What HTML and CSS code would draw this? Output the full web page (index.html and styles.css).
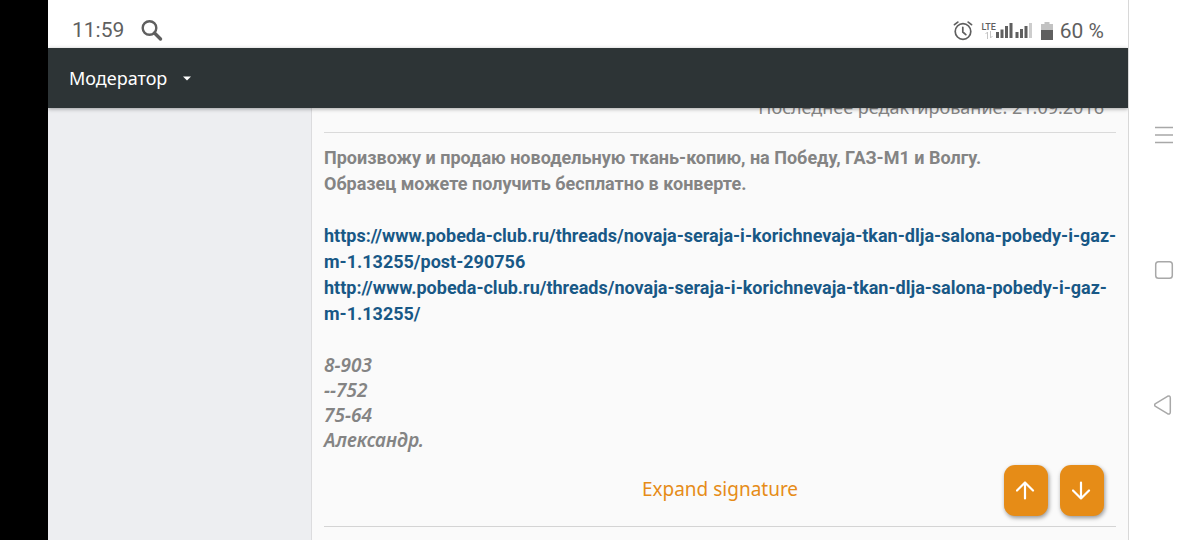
FILE: index.html
```html
<!DOCTYPE html>
<html lang="ru">
<head>
<meta charset="utf-8">
<meta name="viewport" content="width=device-width, initial-scale=1">
<title>Модератор</title>
<link rel="stylesheet" href="styles.css">
</head>
<body>
<div class="device">
  <div class="notch"></div>
  <div class="screen">
    <div class="status">
      <span class="clock">11:59</span>
      <svg class="status-search" width="22" height="22" viewBox="0 0 22 22" fill="none" stroke="#5f5f5f"><circle cx="8.500" cy="8" r="6.800" stroke-width="2.400"/><path d="M13.500 13L19.500 19" stroke-width="3.400" stroke-linecap="round"/></svg>
      <span class="spacer"></span>
      <svg width="20" height="20" viewBox="0 0 20 20" fill="none" stroke="#5f5f5f" stroke-width="1.700" stroke-linecap="round"><circle cx="10" cy="10.500" r="7.800"/><path d="M9.800 6.300V11L12.800 13.700M1.500 3.700L4.800 1.100M18.500 3.700L15.200 1.100"/></svg>
      <span class="network">
        <span class="lte">LTE</span>
        <svg class="data" width="8" height="8" viewBox="0 0 8 8" fill="none" stroke="#c4c4c4"><path d="M2.500 8V1L0.500 3M5.500 0V7L7.500 5"/></svg>
      </span>
      <svg class="signal" width="36" height="16" viewBox="0 0 36 16" fill="#5f5f5f"><path d="M0 9h3v6H0zM4.500 6.500h3V15h-3zM9 3h3v12H9zM13.500 0h3v15h-3zM19.500 9h3v6h-3zM24 6h3v9h-3zM28.500 3h3v12h-3z"/><path d="M33 0h3v15h-3z" fill="#cdcdcd"/></svg>
      <svg class="battery" width="12" height="18" viewBox="0 0 12 18"><path d="M3.500 0h5v2H12v6H0V2h3.500z" fill="#c2c2c2"/><path d="M0 8h12v10H0z" fill="#5f5f5f"/></svg>
      <span class="percent">60 %</span>
    </div>
    <header class="bar">
      <button class="menu" type="button">Модератор
        <svg width="8" height="5" viewBox="0 0 8 5" fill="#fff"><path d="M0 .5h8L4 4.500z"/></svg>
      </button>
    </header>
    <main class="page">
      <aside class="user"></aside>
      <article class="post">
        <p class="edited">Последнее редактирование: 21.09.2016</p>
        <section class="signature">
          <p class="pitch">Произвожу и продаю новодельную ткань-копию, на Победу, ГАЗ-М1 и Волгу.<br>Образец можете получить бесплатно в конверте.</p>
          <p class="links"><a href="https://www.pobeda-club.ru/threads/novaja-seraja-i-korichnevaja-tkan-dlja-salona-pobedy-i-gaz-m-1.13255/post-290756">https://www.pobeda-club.ru/threads/novaja-seraja-i-korichnevaja-tkan-dlja-salona-pobedy-i-gaz-<br>m-1.13255/post-290756</a><br><a href="http://www.pobeda-club.ru/threads/novaja-seraja-i-korichnevaja-tkan-dlja-salona-pobedy-i-gaz-m-1.13255/">http://www.pobeda-club.ru/threads/novaja-seraja-i-korichnevaja-tkan-dlja-salona-pobedy-i-gaz-<br>m-1.13255/</a></p>
          <p class="contact">8-903<br>--752<br>75-64<br>Александр.</p>
          <button class="expand" type="button">Expand signature</button>
        </section>
      </article>
      <div class="scroll-buttons">
        <button class="jump" type="button" aria-label="Вверх"><svg width="20" height="20" viewBox="0 0 20 20" fill="none" stroke="#fff" stroke-width="2.200" stroke-linecap="round" stroke-linejoin="round"><path d="M9 17.500V1.500M1 9.500L9 1.500L17 9.500"/></svg></button>
        <button class="jump" type="button" aria-label="Вниз"><svg width="20" height="20" viewBox="0 0 20 20" fill="none" stroke="#fff" stroke-width="2.200" stroke-linecap="round" stroke-linejoin="round"><path d="M9 1.500V17.500M1 9.500L9 17.500L17 9.500"/></svg></button>
      </div>
    </main>
  </div>
  <nav class="system">
    <button class="key" type="button" aria-label="Меню"><svg width="20" height="20" viewBox="0 0 20 20" stroke="#a8a8a8" stroke-width="1.300"><path d="M1 2.500h18M1 10h18M1 17.500h18"/></svg></button>
    <button class="key" type="button" aria-label="Домой"><svg width="20" height="20" viewBox="0 0 20 20" fill="none" stroke="#a8a8a8" stroke-width="1.500"><rect x="1.700" y="1.700" width="16.600" height="16.600" rx="2.800"/></svg></button>
    <button class="key" type="button" aria-label="Назад"><svg width="20" height="20" viewBox="0 0 20 20" fill="none" stroke="#a8a8a8" stroke-width="1.500" stroke-linejoin="round"><path d="M1.500 8.600L13.500 1.300Q16.300 0 16.300 3V17Q16.300 20 13.500 18.700L1.500 11.400Q-.5 10 1.500 8.600z"/></svg></button>
  </nav>
</div>
</body>
</html>
```

FILE: styles.css
```css
* { box-sizing: border-box; }
body { margin: 0; font-family: "Noto Sans", sans-serif; font-size: 18px; color: #848484; background: #fff; }
p { margin: 0; }
button { padding: 0; border: 0; background: none; font: inherit; color: inherit; }
svg { display: block; flex: none; }

.device { display: flex; height: 100vh; }
.notch { flex: 0 0 48px; background: #000; }
.screen { flex: 1; min-width: 0; display: flex; flex-direction: column; overflow: hidden; }

.status { flex: none; display: flex; align-items: center; height: 48px; padding: 13px 24px 0; font-family: Roboto, sans-serif; font-size: 21px; color: #5f5f5f; }
.clock { line-height: 35px; }
.status-search { margin-left: 17px; }
.spacer { flex: 1; }
.network { display: flex; flex-direction: column; align-items: center; margin-left: 8px; font-size: 9px; font-weight: 500; line-height: 8px; }
.signal { margin-left: 0; }
.battery { margin: 0 7px 0 9px; }

.bar { flex: none; position: relative; z-index: 2; display: flex; height: 60px; padding: 0 21px; background: #2d3436; box-shadow: 0 1px 4px rgba(0, 0, 0, .35); }
.menu { display: flex; align-items: center; gap: 16px; color: #fff; }

.page { flex: 1; min-height: 0; position: relative; display: flex; background: #edeef1; }
.user { flex: 0 0 263px; }
.post { flex: 1; min-width: 0; margin-top: -13px; padding: 0 12px; background: #fafafa; border-left: 1px solid #dcdcde; }
.edited { padding: 0 12px 12px; text-align: right; line-height: 25px; }
.signature { display: flex; flex-direction: column; padding-top: 12px; border-top: 1px solid #dadada; border-bottom: 1px solid #d4d4d4; line-height: 26px; }
.pitch, .links { font-family: Roboto, sans-serif; font-weight: 700; margin-bottom: 26px; }
.links { white-space: nowrap; }
.links a { color: #185886; text-decoration: none; }
.contact { font-size: 19px; font-weight: 600; font-style: italic; line-height: 25px; }
.expand { align-self: center; margin: 23px 0 24px; font-size: 19px; color: #e68c17; }

.scroll-buttons { position: absolute; right: 24px; bottom: 24px; display: flex; gap: 12px; }
.jump { display: grid; place-items: center; width: 44px; height: 51px; border-radius: 11px; background: #e68c17; box-shadow: 1px 2px 4px rgba(0, 0, 0, .4); }

.system { flex: 0 0 72px; display: flex; flex-direction: column; justify-content: space-around; align-items: center; padding: 68px 1px 68px 0; border-left: 1px solid #d8d8d8; }
.key { display: grid; place-items: center; width: 48px; height: 20px; }
```
